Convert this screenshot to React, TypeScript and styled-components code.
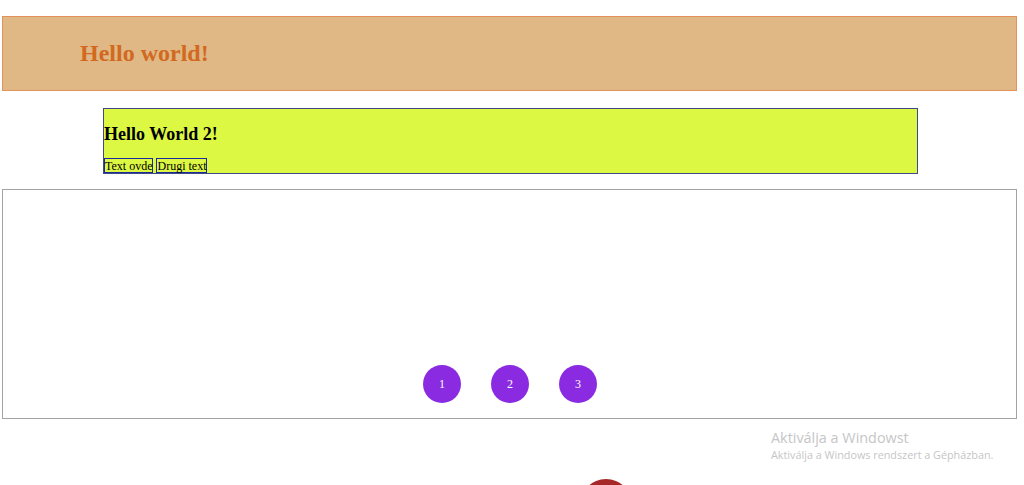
import React from "react";
import styled, { createGlobalStyle } from "styled-components";

const Global = createGlobalStyle`
  html, body { margin: 0; padding: 0; background: #ffffff; }
  body { font-family: "Liberation Serif", "Times New Roman", serif; overflow: hidden; }
`;

const Page = styled.div`
  position: relative;
  width: 1024px;
  height: 485px;
  box-sizing: border-box;
  padding: 16px 7px 0 2px;
  display: flex;
  flex-direction: column;
  overflow: hidden;
`;

const Header = styled.header`
  height: 75px;
  box-sizing: border-box;
  border: 1px solid #e2925a;
  background: #dfb886;
  display: flex;
  align-items: center;
  padding-left: 77px;
`;

const Title = styled.h1`
  margin: 0;
  font-size: 24px;
  font-weight: bold;
  color: #d2691e;
`;

const Banner = styled.section`
  margin: 17px 0 0 101px;
  width: 815px;
  height: 66px;
  box-sizing: border-box;
  border: 1px solid #404a8a;
  background: #dcf843;
  display: flex;
  flex-direction: column;
  justify-content: space-between;
`;

const SubTitle = styled.h3`
  margin: 15px 0 0 0;
  font-size: 18px;
  font-weight: bold;
  color: #000;
  line-height: 20px;
`;

const Tags = styled.div`
  display: flex;
  gap: 3px;
`;

const Tag = styled.span`
  border: 1px solid #1c2a9a;
  font-size: 12px;
  line-height: 12px;
  padding-top: 1px;
  height: 12px;
  color: #000;
`;

const Stage = styled.section`
  margin-top: 15px;
  height: 230px;
  box-sizing: border-box;
  border: 1px solid #a3a3a3;
  display: flex;
  flex-direction: column;
  justify-content: flex-end;
  align-items: center;
  padding-bottom: 15px;
`;

const Dots = styled.div`
  display: flex;
  gap: 30px;
  margin-left: 1px;
`;

const Dot = styled.div`
  width: 38px;
  height: 38px;
  border-radius: 50%;
  background: #8a2be2;
  color: #ffffff;
  font-size: 12px;
  display: flex;
  align-items: center;
  justify-content: center;
`;

const Watermark = styled.div`
  position: absolute;
  left: 771px;
  top: 428px;
  font-family: "Open Sans", "Noto Sans", sans-serif;
  color: #c6c6c6;
  display: flex;
  flex-direction: column;
`;

const WmTitle = styled.div`
  font-size: 14.4px;
  line-height: 19px;
`;

const WmSub = styled.div`
  font-size: 10.8px;
  line-height: 16px;
`;

const RedBall = styled.div`
  position: absolute;
  left: 580px;
  top: 479px;
  width: 52px;
  height: 52px;
  border-radius: 50%;
  background: #a62828;
`;

export default function App() {
  return (
    <>
      <Global />
      <Page>
        <Header>
          <Title>Hello world!</Title>
        </Header>
        <Banner>
          <SubTitle>Hello World 2!</SubTitle>
          <Tags>
            <Tag>Text ovde</Tag>
            <Tag>Drugi text</Tag>
          </Tags>
        </Banner>
        <Stage>
          <Dots>
            {["1", "2", "3"].map((n) => (
              <Dot key={n}>{n}</Dot>
            ))}
          </Dots>
        </Stage>
        <Watermark>
          <WmTitle>Aktiválja a Windowst</WmTitle>
          <WmSub>Aktiválja a Windows rendszert a Gépházban.</WmSub>
        </Watermark>
        <RedBall />
      </Page>
    </>
  );
}
